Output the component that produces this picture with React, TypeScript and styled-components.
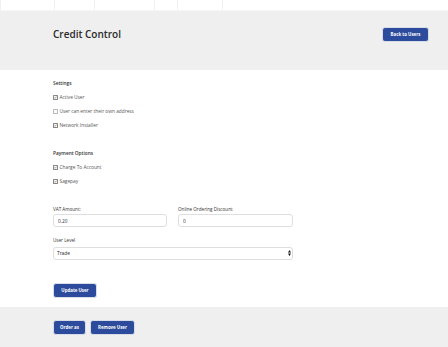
import styled, { createGlobalStyle } from "styled-components";

const GlobalStyle = createGlobalStyle`
  html, body {
    margin: 0;
    padding: 0;
    background: #ffffff;
    font-family: "Open Sans", "Liberation Sans", sans-serif;
    color: #333333;
  }
`;

const BLUE = "#2c4b9c";
const GREY = "#efefef";

const TopStrip = styled.div`
  display: flex;
  height: 10px;
  background: #ffffff;
`;

const StripCell = styled.div<{ $w: number }>`
  width: ${(p) => p.$w}px;
  height: 10px;
  border-right: 1px solid #f1f1f1;
  box-sizing: border-box;
`;

const Header = styled.div`
  display: flex;
  align-items: center;
  justify-content: space-between;
  height: 60px;
  box-sizing: border-box;
  padding: 16px 19px 29px 53px;
  background: ${GREY};
  border-top: 1px solid #f6f6f6;
`;

const Title = styled.h1`
  margin: 0;
  font-size: 10px;
  font-weight: 600;
  color: #2a2a2a;
`;

const Button = styled.button<{ $w: number }>`
  width: ${(p) => p.$w}px;
  height: 15px;
  padding: 0;
  border: 1px solid #d8dde8;
  border-radius: 3px;
  background: ${BLUE};
  color: #ffffff;
  font-family: "Open Sans", "Liberation Sans", sans-serif;
  font-size: 4.4px;
  font-weight: 700;
  cursor: pointer;
`;

const Body = styled.div`
  padding: 6px 0 9px 53px;
`;

const Section = styled.div<{ $gap: number }>`
  margin-bottom: ${(p) => p.$gap}px;
`;

const SectionTitle = styled.div`
  height: 14px;
  line-height: 14px;
  font-size: 4.8px;
  font-weight: 600;
`;

const CheckRow = styled.label`
  display: flex;
  align-items: center;
  gap: 1.5px;
  height: 14px;
  font-size: 4.8px;
  color: #555555;
`;

const Box = styled.span<{ $on: boolean }>`
  display: inline-flex;
  align-items: center;
  justify-content: center;
  width: 3px;
  height: 3px;
  border: 0.5px solid ${(p) => (p.$on ? "#888" : "#bbb")};
  background: #fafafa;
  border-radius: 0.5px;
`;

const Grid = styled.div`
  display: grid;
  grid-template-columns: 114px 115px;
  column-gap: 11px;
  width: 240px;
`;

const Field = styled.div<{ $span?: boolean; $mt?: number }>`
  display: flex;
  flex-direction: column;
  grid-column: ${(p) => (p.$span ? "1 / 3" : "auto")};
  margin-top: ${(p) => p.$mt ?? 0}px;
`;

const FieldLabel = styled.div<{ $mb: number }>`
  height: 7px;
  line-height: 7px;
  font-size: 4.6px;
  margin-bottom: ${(p) => p.$mb}px;
  color: #333333;
`;

const Input = styled.input`
  box-sizing: border-box;
  height: 13px;
  width: 100%;
  padding: 0 4px;
  border: 0.5px solid #dedede;
  border-radius: 3px;
  font-family: "Open Sans", "Liberation Sans", sans-serif;
  font-size: 4.8px;
  color: #333333;
  outline: none;
`;

const SelectBox = styled.div`
  display: flex;
  align-items: center;
  box-sizing: border-box;
  height: 13px;
  padding: 0 1.5px 0 3px;
  border: 0.5px solid #dedede;
  border-radius: 3px;
`;

const Select = styled.select`
  flex: 1;
  appearance: none;
  border: none;
  background: transparent;
  padding: 0;
  font-family: "Open Sans", "Liberation Sans", sans-serif;
  font-size: 4.8px;
  color: #222222;
  outline: none;
`;

const Actions = styled.div`
  display: flex;
  margin-top: 23px;
`;

const Footer = styled.div`
  display: flex;
  gap: 4px;
  height: 41px;
  box-sizing: border-box;
  padding: 13px 0 0 53px;
  background: ${GREY};
`;

function Check({ on, label }: { on: boolean; label: string }) {
  return (
    <CheckRow>
      <Box $on={on}>
        {on && (
          <svg width="3" height="3" viewBox="0 0 10 10">
            <path d="M1.5 5 L4 7.5 L8.5 2" stroke="#444" strokeWidth="1.6" fill="none" />
          </svg>
        )}
      </Box>
      {label}
    </CheckRow>
  );
}

const App = () => {
  return (
    <>
      <GlobalStyle />
      <TopStrip>
        {[1, 54, 40, 60, 23, 45].map((w, i) => (
          <StripCell key={i} $w={w} />
        ))}
      </TopStrip>
      <Header>
        <Title>Credit Control</Title>
        <Button $w={47}>Back to Users</Button>
      </Header>
      <Body>
        <Section $gap={14}>
          <SectionTitle>Settings</SectionTitle>
          <Check on label="Active User" />
          <Check on={false} label="User can enter their own address" />
          <Check on label="Network Installer" />
        </Section>
        <Section $gap={18}>
          <SectionTitle>Payment Options</SectionTitle>
          <Check on label="Charge To Account" />
          <Check on label="Sagepay" />
        </Section>
        <Grid>
          <Field>
            <FieldLabel $mb={1}>VAT Amount:</FieldLabel>
            <Input defaultValue="0.20" />
          </Field>
          <Field>
            <FieldLabel $mb={1}>Online Ordering Discount</FieldLabel>
            <Input defaultValue="0" />
          </Field>
          <Field $span $mt={10}>
            <FieldLabel $mb={2.5}>User Level</FieldLabel>
            <SelectBox>
              <Select defaultValue="Trade">
                <option>Trade</option>
                <option>Retail</option>
              </Select>
              <svg width="3" height="6" viewBox="0 0 6 12">
                <path d="M3 0 L6 5 L0 5 Z M3 12 L6 7 L0 7 Z" fill="#111" />
              </svg>
            </SelectBox>
          </Field>
        </Grid>
        <Actions>
          <Button $w={44}>Update User</Button>
        </Actions>
      </Body>
      <Footer>
        <Button $w={33}>Order as</Button>
        <Button $w={45}>Remove User</Button>
      </Footer>
    </>
  );
};

export default App;
